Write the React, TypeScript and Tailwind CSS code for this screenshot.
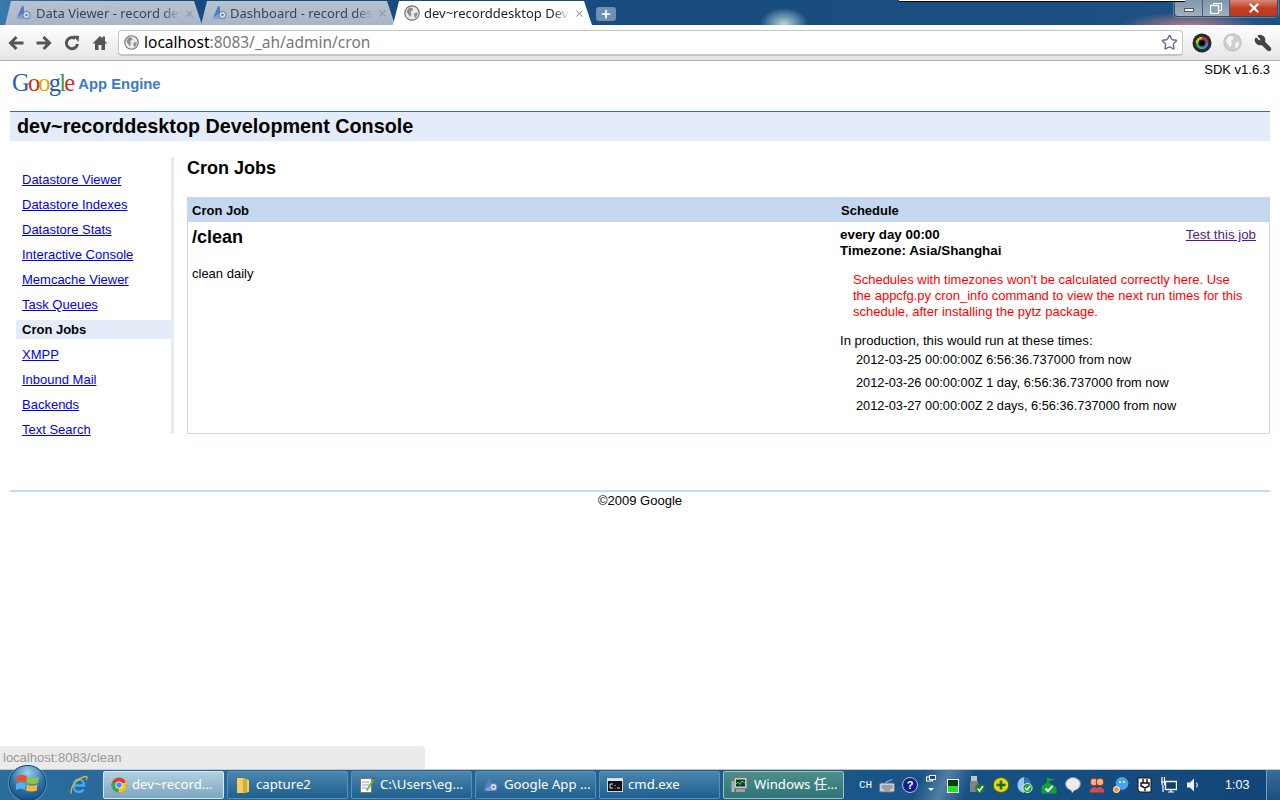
import { Star, Wrench, Plus, X } from "lucide-react"

const navItems = [
  "Datastore Viewer",
  "Datastore Indexes",
  "Datastore Stats",
  "Interactive Console",
  "Memcache Viewer",
  "Task Queues",
  "Cron Jobs",
  "XMPP",
  "Inbound Mail",
  "Backends",
  "Text Search",
]

const runTimes = [
  "2012-03-25 00:00:00Z 6:56:36.737000 from now",
  "2012-03-26 00:00:00Z 1 day, 6:56:36.737000 from now",
  "2012-03-27 00:00:00Z 2 days, 6:56:36.737000 from now",
]

function Globe({ size = 16, muted = false }: { size?: number; muted?: boolean }) {
  return (
    <svg width={size} height={size} viewBox="0 0 16 16" className="shrink-0">
      <circle cx="8" cy="8" r="7.2" fill={muted ? "#cfcfcf" : "#e8eaec"} stroke={muted ? "#c4c4c4" : "#6d7074"} strokeWidth="1.2" />
      <path d="M5 2.5 L8.5 3 L9 5 L6.5 6.5 L7.5 9 L6 12 L4 9 L2.5 6.5 Z" fill={muted ? "#f6f6f6" : "#8a8f96"} />
      <path d="M10.5 8 L13.5 7.5 L13 11 L11 13 L10 10.5 Z" fill={muted ? "#f6f6f6" : "#8a8f96"} />
    </svg>
  )
}

function AppEngineIcon() {
  return (
    <svg width="16" height="16" viewBox="0 0 16 16" className="shrink-0">
      <path d="M6 1 L8 1.5 L8 8 L1 13 L3 8 Z" fill="#4f7fc0" />
      <path d="M1 13 L8 8 L14 14 L4 14 Z" fill="#7fa3d4" />
      <circle cx="10.5" cy="10" r="3.6" fill="#d5dde8" stroke="#5a7fb0" />
      <circle cx="10.5" cy="10" r="1.2" fill="#5a7fb0" />
    </svg>
  )
}

function Tab({ title, active, className }: { title: string; active?: boolean; className: string }) {
  return (
    <div
      className={`flex items-center gap-[4px] h-[24px] pl-[11px] pr-[7px] rounded-t-[4px] [clip-path:polygon(0_100%,6px_0,calc(100%-8px)_0,100%_100%)] ${
        active ? "bg-white text-[#222]" : "bg-gradient-to-b from-[#b7c2d0] to-[#a7b6c8] text-[#3c4650]"
      } ${className}`}
    >
      {active ? <Globe /> : <AppEngineIcon />}
      <span className="flex-1 pt-[1px] overflow-hidden whitespace-nowrap text-[13px] [mask-image:linear-gradient(to_right,black_88%,transparent)] font-['Noto_Sans','Liberation_Sans',sans-serif]">
        {title}
      </span>
      <X size={11} strokeWidth={2.2} className="shrink-0 text-[#8b8f96]" />
    </div>
  )
}

function NavGlyph({ d, className = "" }: { d: string; className?: string }) {
  return (
    <svg width="16" height="16" viewBox="0 0 16 16" className={`shrink-0 ${className}`}>
      <path d={d} fill="none" stroke="#555" strokeWidth="3" />
    </svg>
  )
}

function ChromeLogo() {
  return (
    <svg width="16" height="16" viewBox="0 0 16 16" className="shrink-0">
      <circle cx="8" cy="8" r="7.5" fill="#e33b2e" />
      <path d="M8 8 L1.5 4.2 A7.5 7.5 0 0 0 7.4 15.5 Z" fill="#3aa757" />
      <path d="M8 8 L15 5 A7.5 7.5 0 0 1 7.4 15.5 Z" fill="#fbc116" />
      <circle cx="8" cy="8" r="3.6" fill="#fff" />
      <circle cx="8" cy="8" r="2.7" fill="#4a8af0" />
    </svg>
  )
}

function FolderIcon() {
  return (
    <svg width="16" height="18" viewBox="0 0 16 18" className="shrink-0">
      <path d="M2 2 H9 L14 4 V16 L9 17 H2 Z" fill="#f2cf63" />
      <path d="M8 2 L12 3.5 V16 L8 17 Z" fill="#d9a93a" />
    </svg>
  )
}

function NotepadIcon() {
  return (
    <svg width="16" height="18" viewBox="0 0 16 18" className="shrink-0">
      <rect x="1.5" y="2.5" width="11" height="14" fill="#fff" stroke="#777" />
      <path d="M3 6 H10 M3 9 H10 M3 12 H8" stroke="#8aa0b8" />
      <path d="M7 14 L14 3 L15.5 4 L8.5 15 Z" fill="#7cae2e" />
      <path d="M13.5 3 L15 0.5 L16 3 Z" fill="#c0392b" />
    </svg>
  )
}

function CmdIcon() {
  return (
    <svg width="16" height="14" viewBox="0 0 16 14" className="shrink-0">
      <rect x="0.5" y="0.5" width="15" height="13" fill="#111" stroke="#cfd6dd" />
      <rect x="1" y="1" width="14" height="2" fill="#dfe6ee" />
      <path d="M3 6 H6 M3 6 V10 H6 M8 7 V8 M8 10 V10.5 M10 10 H13" stroke="#e8e8e8" fill="none" />
    </svg>
  )
}

function MonitorIcon() {
  return (
    <svg width="18" height="18" viewBox="0 0 18 18" className="shrink-0">
      <rect x="3" y="1.5" width="13" height="11" fill="#c8ccd0" stroke="#777" />
      <rect x="5" y="3.5" width="9" height="7" fill="#0e3a22" />
      <path d="M5 8 L7 6 L9 8.5 L11 5 L14 7" stroke="#4be36a" fill="none" />
      <rect x="0.5" y="5" width="3" height="11" fill="#aab0b6" />
      <rect x="5" y="13" width="9" height="3" fill="#9aa0a6" />
    </svg>
  )
}

function TaskButton({ icon, label, active, green }: { icon: React.ReactNode; label: string; active?: boolean; green?: boolean }) {
  const tone = active
    ? "bg-gradient-to-b from-[#b3d0e0] to-[#7ba6c0] border-[#dbe9f2]"
    : green
      ? "bg-gradient-to-b from-[#4f8f8a] to-[#2f7377] border-[#9cc4bb]"
      : "bg-gradient-to-b from-[#4a86ad] to-[#1d5f8f] border-[#5f8fb0]"
  return (
    <div className={`flex items-center gap-[5px] w-[121px] h-[28px] pl-[7px] rounded-[2px] border ${tone}`}>
      {icon}
      <span className="whitespace-nowrap text-[13.2px] text-white font-['Noto_Sans','Noto_Sans_CJK_SC',sans-serif]">{label}</span>
    </div>
  )
}

function Tray() {
  return (
    <div className="flex items-center ml-[15px] h-full gap-[8px]">
      <span className="w-[12px] text-[11px] leading-none text-white font-['Liberation_Mono',monospace]">CH</span>
      <svg width="16" height="15" viewBox="0 0 16 15" className="shrink-0">
        <rect x="0.5" y="5" width="15" height="9" rx="1.5" fill="#c9ced3" stroke="#6b7278" />
        <path d="M2.5 8 H13.5 M2.5 10 H13.5 M5 12 H11" stroke="#6b7278" />
        <path d="M7 5 C7 2 12 4 13 1" stroke="#d5d9dd" fill="none" />
      </svg>
      <svg width="16" height="16" viewBox="0 0 16 16" className="-ml-px shrink-0">
        <circle cx="8" cy="8" r="7.5" fill="#141e8a" stroke="#b9c2cc" />
        <text x="8" y="12" textAnchor="middle" fontSize="11" fontWeight="700" fill="#fff" fontFamily="Liberation Sans">?</text>
      </svg>
      <svg width="10" height="17" viewBox="0 0 10 17" className="shrink-0 -mt-[4px]">
        <rect x="0.5" y="2" width="6" height="4" fill="none" stroke="#fff" />
        <rect x="3.5" y="0.5" width="6" height="4" fill="#1a4a7c" stroke="#fff" />
        <path d="M2 13 H8 L5 16 Z" fill="#fff" />
      </svg>
      <svg width="12" height="14" viewBox="0 0 12 14" className="ml-[3px] mt-[1px] shrink-0">
        <rect width="12" height="14" fill="#fff" />
        <rect x="1" y="1" width="10" height="6" fill="#0a3d0a" />
        <rect x="1" y="7" width="10" height="6" fill="#22e622" />
      </svg>
      <svg width="16" height="18" viewBox="0 0 16 18" className="ml-[2px] shrink-0">
        <rect x="2" y="0" width="6" height="5" fill="#bfc3c7" />
        <rect x="1" y="5" width="8" height="11" rx="1" fill="#7f8489" />
        <circle cx="11" cy="12.5" r="4.8" fill="#1f7a2a" />
        <path d="M8.5 12.5 L10.5 15 L14 10" stroke="#fff" strokeWidth="1.5" fill="none" />
      </svg>
      <svg width="16" height="16" viewBox="0 0 16 16" className="shrink-0">
        <ellipse cx="8" cy="8" rx="7.8" ry="7.5" fill="#e8d80c" stroke="#3a6b18" />
        <path d="M8 3.5 V12.5 M3.5 8 H12.5" stroke="#1c6b1c" strokeWidth="2.6" />
      </svg>
      <svg width="16" height="18" viewBox="0 0 16 18" className="shrink-0">
        <path d="M7 1 C2.5 2 0.5 5.5 0.5 9 C0.5 13.5 3.5 16 7 17 Z" fill="#9cc7ef" />
        <path d="M7 1 C11 1 14 4 14 7.5 L7 9.5 Z" fill="#2f73bf" />
        <circle cx="10.5" cy="12" r="4.6" fill="#2d9c3c" stroke="#c9f0cf" />
        <path d="M8 12 L10 14 L13 10" stroke="#fff" strokeWidth="1.4" fill="none" />
      </svg>
      <svg width="16" height="17" viewBox="0 0 16 17" className="shrink-0">
        <path d="M0.5 16.5 V9 L6 5.5 V0.5 L14 2.5 L8 4.5 V5.5 L15.5 10 V16.5 Z" fill="#0fa336" />
        <path d="M4.5 11.5 L7 14 L11.5 9" stroke="#fff" strokeWidth="2" fill="none" />
      </svg>
      <svg width="16" height="16" viewBox="0 0 16 16" className="shrink-0">
        <ellipse cx="8" cy="7" rx="7.4" ry="6.4" fill="#ececec" stroke="#8f9aa3" />
        <path d="M6 12.5 L7 16 L10 12.5 Z" fill="#ececec" />
      </svg>
      <svg width="16" height="16" viewBox="0 0 16 16" className="shrink-0">
        <circle cx="5" cy="5" r="3.8" fill="#f2b48a" stroke="#93301e" />
        <circle cx="11" cy="5" r="3.8" fill="#f2b48a" stroke="#93301e" />
        <path d="M0.5 15.5 C0.5 9.5 7 9.5 8 11.5 C9 9.5 15.5 9.5 15.5 15.5 Z" fill="#d84a4a" />
      </svg>
      <svg width="16" height="16" viewBox="0 0 16 16" className="shrink-0">
        <circle cx="9" cy="6.5" r="6.4" fill="#4aa3e8" />
        <circle cx="7" cy="5" r="1" fill="#fff" />
        <circle cx="11" cy="5" r="1" fill="#fff" />
        <circle cx="3.5" cy="12.5" r="3" fill="#f39a1c" stroke="#fff" />
      </svg>
      <svg width="16" height="16" viewBox="0 0 16 16" className="shrink-0">
        <path d="M1 1 H14 V15 H3 L1 13 Z" fill="#fff" stroke="#111" />
        <path d="M6 2 V6 M10 2 V6 M4 6 H12 V9 L8 11 L4 9 Z M8 11 V14" stroke="#111" strokeWidth="1.4" fill="none" />
      </svg>
      <svg width="16" height="16" viewBox="0 0 16 16" className="shrink-0">
        <rect x="4.5" y="4.5" width="11" height="8" fill="#123f6c" stroke="#fff" strokeWidth="1.4" />
        <path d="M7 15 H13 M10 12.5 V15 M1 0 V8 M3.5 0 V8 M0 5 H4.5 M2 8 V15" stroke="#fff" strokeWidth="1.2" />
      </svg>
      <svg width="16" height="16" viewBox="0 0 16 16" className="shrink-0">
        <path d="M2 5.5 H5 L9 1.5 V14.5 L5 10.5 H2 Z" fill="#eef1f3" />
        <path d="M11.5 5.5 C12.5 7 12.5 9 11.5 10.5" stroke="#cdd6de" strokeWidth="1.2" fill="none" />
      </svg>
      <span className="ml-[16px] text-[12.5px] text-white font-['Liberation_Sans',sans-serif]">1:03</span>
    </div>
  )
}

export default function App() {
  return (
    <div className="relative flex flex-col w-[1280px] h-[800px] overflow-hidden bg-white text-[13px] text-black font-['Liberation_Sans',Arial,sans-serif]">
      {/* Window frame with tabs */}
      <div className="relative flex items-end h-[25px] shrink-0 pl-[5px] bg-[radial-gradient(ellipse_24px_16px_at_784px_24px,#b9d3dc,transparent),radial-gradient(ellipse_70px_14px_at_1190px_26px,#b9808a,transparent),linear-gradient(to_right,#3a78ad,#164a7e_10%,#1a4d80_70%,#1d5285)]">
        <Tab title="Data Viewer - record des" className="w-[197px]" />
        <Tab title="Dashboard - record desk" className="w-[194px] -ml-[1px] [&>span]:-ml-[2px]" />
        <Tab title="dev~recorddesktop Deve" active className="w-[199px] -ml-[2px]" />
        <div className="flex items-center justify-center w-[20px] h-[14px] ml-[4px] mb-[4px] rounded-[3px] bg-[#6f90b4]">
          <Plus size={12} strokeWidth={3.5} className="text-white" />
        </div>
        <div className="absolute top-0 left-[899px] w-[286px] h-[2px] bg-white border-b border-black z-10" />
        <div className="absolute top-0 right-[2px] flex h-[17px] rounded-b-[4px] overflow-hidden border border-t-0 border-[#3c4a58] shadow-[0_0_0_1px_#d8dfe655]">
          <div className="flex items-center justify-center w-[28px] bg-gradient-to-b from-[#7f97ae] to-[#9fb0c0] border-r border-[#4a5a68]">
            <div className="w-[10px] h-[4px] mt-[3px] bg-white border border-[#556]" />
          </div>
          <div className="flex items-center justify-center w-[27px] bg-gradient-to-b from-[#7f97ae] to-[#9fb0c0] border-r border-[#4a5a68]">
            <svg width="12" height="11" viewBox="0 0 12 11">
              <rect x="3.5" y="0.5" width="8" height="7" fill="none" stroke="#fff" />
              <rect x="0.5" y="2.5" width="8" height="8" fill="#8ba0b5" stroke="#fff" strokeWidth="1.4" />
            </svg>
          </div>
          <div className="flex items-center justify-center w-[47px] bg-gradient-to-b from-[#d5897a] via-[#c43c22] to-[#b93a24]">
            <X size={14} strokeWidth={4} className="text-white" />
          </div>
        </div>
      </div>

      {/* Toolbar */}
      <div className="flex items-center h-[36px] shrink-0 pl-[8px] pr-[8px] bg-gradient-to-b from-white to-[#e6e6e6] border-b border-[#a9abad]">
        <NavGlyph d="M8.5 2 L2.5 8 L8.5 14 M3 8 H15.5" />
        <NavGlyph d="M7.5 2 L13.5 8 L7.5 14 M13 8 H0.5" className="ml-[12px]" />
        <svg width="16" height="16" viewBox="0 0 16 16" className="ml-[12px] shrink-0">
          <path d="M13.5 9 A5.6 5.6 0 1 1 11 3.4" fill="none" stroke="#555" strokeWidth="3" />
          <path d="M9 0.5 L15 1 L14.5 7 Z" fill="#555" />
        </svg>
        <svg width="16" height="16" viewBox="0 0 16 16" className="ml-[12px] shrink-0">
          <path d="M8 1 L0.5 8.5 H3 V15 H6.5 V10 H9.5 V15 H13 V8.5 H15.5 L13 6 V1.5 H10.5 V3.5 Z" fill="#555" />
        </svg>
        <div className="flex items-center flex-1 h-[26px] ml-[10px] pl-[5px] pr-[4px] bg-white rounded-[4px] border border-[#c4c4c4] border-b-2">
          <Globe size={15} />
          <span className="ml-[5px] pt-[1px] text-[15.5px] text-black font-['Noto_Sans','Liberation_Sans',sans-serif]">
            localhost<span className="text-[#777]">:8083/_ah/admin/cron</span>
          </span>
          <Star size={17} strokeWidth={2} className="ml-auto text-[#63718c]" />
        </div>
        <svg width="20" height="20" viewBox="0 0 20 20" className="ml-[9px] shrink-0">
          <circle cx="10" cy="10" r="9.5" fill="#25282d" />
          <circle cx="10" cy="10" r="5" fill="none" stroke="#22c55e" strokeWidth="2.4" />
          <path d="M10 5 A5 5 0 0 1 15 10" fill="none" stroke="#e11d48" strokeWidth="2.4" />
          <path d="M5 10 A5 5 0 0 1 10 5" fill="none" stroke="#eab308" strokeWidth="2.4" />
          <path d="M15 10 A5 5 0 0 1 10 15" fill="none" stroke="#3b82f6" strokeWidth="2.4" />
          <circle cx="10" cy="10" r="2.5" fill="#000" />
        </svg>
        <div className="ml-[11px]">
          <Globe size={19} muted />
        </div>
        <Wrench size={18} fill="#444" strokeWidth={2} className="ml-[12px] text-[#444] -scale-x-100" />
      </div>

      {/* Page */}
      <div className="relative flex-1 px-[10px]">
        <div className="flex justify-between h-[50px]">
          <div className="flex items-center gap-[5px] ml-[2px] mb-[6px]">
            <span className="text-[24.5px] tracking-[-1.8px] font-['Liberation_Serif',serif]">
              <span className="text-[#2a5db0]">G</span>
              <span className="text-[#c8311f]">o</span>
              <span className="text-[#e0a800]">o</span>
              <span className="text-[#2a5db0]">g</span>
              <span className="text-[#3a9a3a]">l</span>
              <span className="text-[#c8311f]">e</span>
            </span>
            <span className="pt-[2px] text-[14.8px] font-bold text-[#3a7ac8]">App Engine</span>
          </div>
          <span className="pt-[1px] text-[13px] leading-[16px]">SDK v1.6.3</span>
        </div>

        <div className="h-[30px] pl-[7px] bg-[#e5ecf9] border-t border-[#3366cc] text-[19.8px] leading-[29px] font-bold">
          dev~recorddesktop Development Console
        </div>

        <div className="flex mt-[16px]">
          <div className="w-[164px] h-[277px] pt-[13px] shrink-0 border-r-[3px] border-[#e5ecf9]">
            <div className="flex flex-col gap-[6px] pl-[6px]">
              {navItems.map((item) =>
                item === "Cron Jobs" ? (
                  <div key={item} className="h-[19px] pl-[6px] leading-[19px] font-bold bg-[#e5ecf9]">
                    {item}
                  </div>
                ) : (
                  <a key={item} href="#" className="h-[19px] pl-[6px] leading-[19px] text-[#0000ee] underline">
                    {item}
                  </a>
                ),
              )}
            </div>
          </div>

          <div className="flex-1 min-w-0 pl-[13px]">
            <h2 className="h-[22px] text-[18px] leading-[22px] font-bold">Cron Jobs</h2>
            <div className="mt-[18px] h-[237px] border border-t-0 border-[#c5d7ef]">
              <div className="flex h-[25px] -mx-px bg-[#c5d7ef] font-bold leading-[27px]">
                <div className="w-[649px] pl-[5px]">Cron Job</div>
                <div className="pl-[5px]">Schedule</div>
              </div>
              <div className="flex">
                <div className="w-[648px] pl-[4px]">
                  <div className="mt-[3px] text-[18px] leading-[24px] font-bold">/clean</div>
                  <div className="mt-[17px] leading-[16px]">clean daily</div>
                </div>
                <div className="relative flex-1 pl-[4px] pt-[5px]">
                  <a href="#" className="absolute top-[5px] right-[13px] text-[13.3px] leading-[16px] text-[#551a8b] underline">
                    Test this job
                  </a>
                  <div className="text-[13.4px] font-bold leading-[16px]">
                    <div>every day 00:00</div>
                    <div>Timezone: Asia/Shanghai</div>
                  </div>
                  <div className="mt-[13px] pl-[13px] leading-[16px] text-[#ff0000] whitespace-nowrap">
                    <div>Schedules with timezones won't be calculated correctly here. Use</div>
                    <div>the appcfg.py cron_info command to view the next run times for this</div>
                    <div>schedule, after installing the pytz package.</div>
                  </div>
                  <div className="mt-[13px] text-[13.1px] leading-[16px]">In production, this would run at these times:</div>
                  <div className="flex flex-col gap-[7px] mt-[3px] pl-[16px] text-[12.8px] leading-[16px]">
                    {runTimes.map((t) => (
                      <div key={t}>{t}</div>
                    ))}
                  </div>
                </div>
              </div>
            </div>
          </div>
        </div>

        <div className="mt-[56px] h-[21px] border-t-2 border-[#c3d9ff] text-center leading-[18px]">©2009 Google</div>

        {/* Status bubble */}
        <div className="absolute bottom-0 left-0 w-[425px] h-[23px] pl-[3px] bg-[#ebebeb] rounded-tr-[4px] text-[13px] leading-[24px] text-[#999]">
          localhost:8083/clean
        </div>
      </div>

      {/* Taskbar */}
      <div className="flex items-center justify-between h-[31px] shrink-0 border-t border-[#b9cbd9] bg-[linear-gradient(112deg,transparent_71.5%,#ffffff40_73.5%,transparent_75.5%),linear-gradient(to_right,#2a6c9c,#1d5f92_50%,#124578)]">
        <div className="flex items-center h-full">
          <div className="flex items-center w-[103px] h-full">
            <div className="relative z-10 -mt-[5px] ml-[9px] w-[37px] h-[36px] shrink-0 rounded-full border border-[#1d3f5e] bg-[radial-gradient(circle_at_50%_20%,#9fd0ee,#2a6fa8_55%,#0c3f70)] flex items-center justify-center shadow-[0_0_2px_#cfe6f5]">
              <svg width="24" height="22" viewBox="0 0 22 20">
                <path d="M1 4 C4 2 7 2 10 4 L9 9.5 C6.5 8 4 8 0 9.5 Z" fill="#e8502e" />
                <path d="M11 4.5 C14 6.5 17 6 21 4.5 L20 10 C17 11 14 11.5 10 10 Z" fill="#8cc63f" />
                <path d="M0 11 C3 9.5 6 9.5 9 11 L8 16.5 C5 15 3 15 0 16.5 Z" fill="#4fb4ee" />
                <path d="M10 11.5 C13 13 16.5 12.5 19.5 11.5 L19 17 C16 18 13 18 9 17 Z" fill="#f6b92c" />
              </svg>
            </div>
            <svg width="18" height="20" viewBox="0 0 18 20" className="ml-[24px] shrink-0">
              <path d="M3.5 10.5 H14 C14 6.5 11.5 4.5 9 4.5 C5.5 4.5 3.5 7.5 3.5 11 C3.5 15 6 17 9 17 C11 17 12.5 16 13.5 14.5" fill="none" stroke="#49a9ec" strokeWidth="2.4" />
              <path d="M1.5 18.5 C-0.5 13 6 4 15 1.5 C17.5 1 17.5 3 16 5" fill="none" stroke="#f0b432" strokeWidth="1.3" />
            </svg>
          </div>
          <div className="flex items-center gap-[3px]">
            <TaskButton icon={<ChromeLogo />} label="dev~record..." active />
            <TaskButton icon={<FolderIcon />} label="capture2" />
            <TaskButton icon={<NotepadIcon />} label="C:\Users\eg..." />
            <TaskButton icon={<AppEngineIcon />} label="Google App ..." />
            <TaskButton icon={<CmdIcon />} label="cmd.exe" />
            <TaskButton icon={<MonitorIcon />} label="Windows 任..." green />
          </div>
          <Tray />
        </div>
        <div className="w-[14px] h-full border-l border-[#7d9db8] bg-gradient-to-b from-[#3a6d98] to-[#1d4f80]" />
      </div>
    </div>
  )
}
